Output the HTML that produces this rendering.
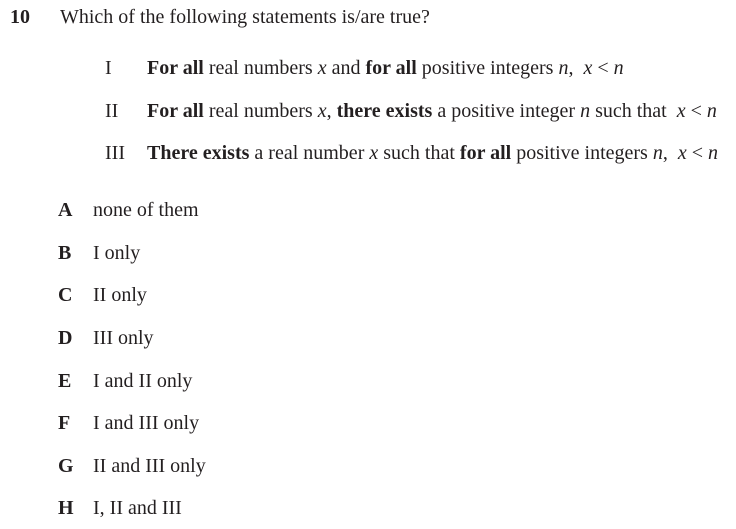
<!DOCTYPE html>
<html><head><meta charset="utf-8"><style>
body{margin:0;width:736px;height:529px;background:#fff;position:relative;font-family:"Liberation Serif",serif;font-size:20px;color:#231f20;}
div{position:absolute;line-height:20px;white-space:nowrap;}
b{font-weight:bold}
i{font-style:italic}
</style></head><body>
<div style="left:10px;top:7px"><b>10</b></div>
<div style="left:60px;top:7px">Which of the following statements is/are true?</div>
<div style="left:105px;top:58px">I</div>
<div style="left:147px;top:58px"><b>For all</b> real numbers <i>x</i> and <b>for all</b> positive integers <i>n</i>, &nbsp;<i>x</i> &lt; <i>n</i></div>
<div style="left:105px;top:101px">II</div>
<div style="left:147px;top:101px"><b>For all</b> real numbers <i>x</i>, <b>there exists</b> a positive integer <i>n</i> such that &nbsp;<i>x</i> &lt; <i>n</i></div>
<div style="left:105px;top:143px">III</div>
<div style="left:147px;top:143px"><b>There exists</b> a real number <i>x</i> such that <b>for all</b> positive integers <i>n</i>, &nbsp;<i>x</i> &lt; <i>n</i></div>
<div style="left:58px;top:200px"><b>A</b></div><div style="left:93px;top:200px">none of them</div>
<div style="left:58px;top:243px"><b>B</b></div><div style="left:93px;top:243px">I only</div>
<div style="left:58px;top:285px"><b>C</b></div><div style="left:93px;top:285px">II only</div>
<div style="left:58px;top:328px"><b>D</b></div><div style="left:93px;top:328px">III only</div>
<div style="left:58px;top:371px"><b>E</b></div><div style="left:93px;top:371px">I and II only</div>
<div style="left:58px;top:413px"><b>F</b></div><div style="left:93px;top:413px">I and III only</div>
<div style="left:58px;top:456px"><b>G</b></div><div style="left:93px;top:456px">II and III only</div>
<div style="left:58px;top:498px"><b>H</b></div><div style="left:93px;top:498px">I, II and III</div>
</body></html>
